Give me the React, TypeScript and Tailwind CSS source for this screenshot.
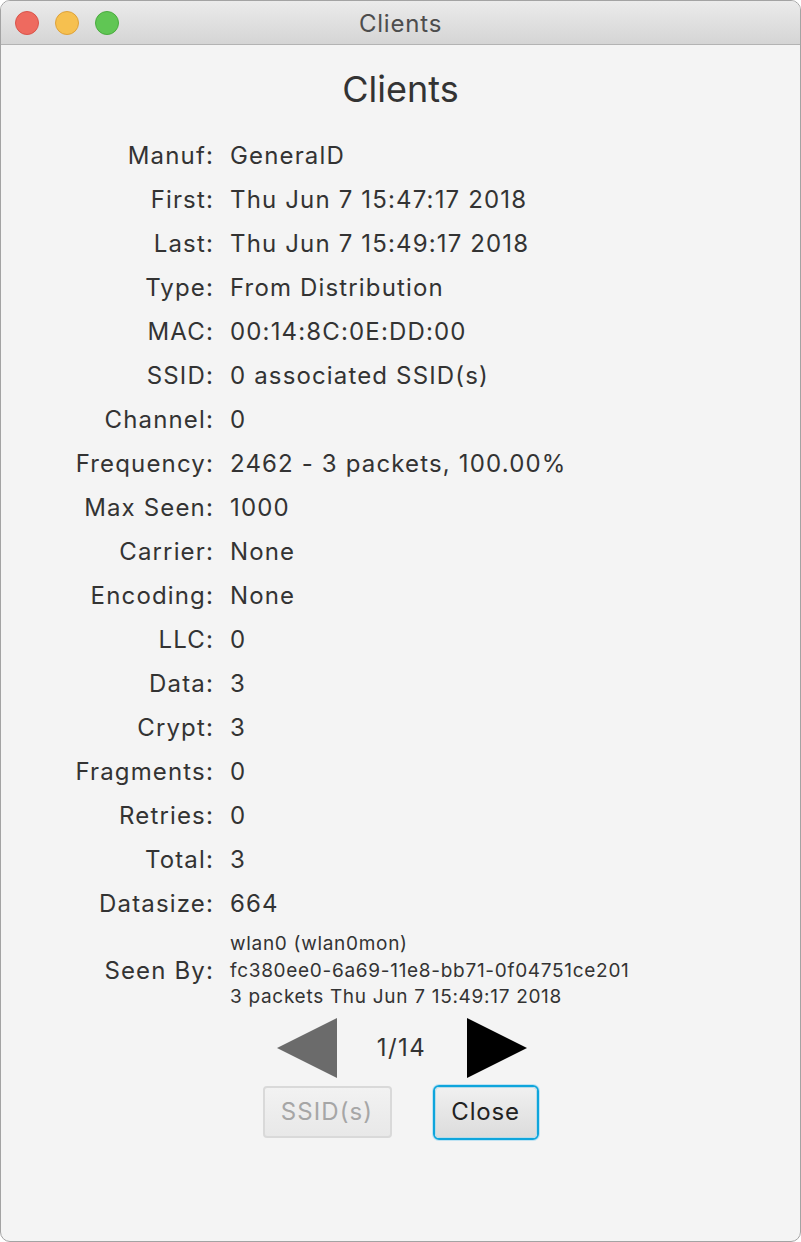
const rows: [string, string][] = [
  ["Manuf:", "GeneralD"],
  ["First:", "Thu Jun 7 15:47:17 2018"],
  ["Last:", "Thu Jun 7 15:49:17 2018"],
  ["Type:", "From Distribution"],
  ["MAC:", "00:14:8C:0E:DD:00"],
  ["SSID:", "0 associated SSID(s)"],
  ["Channel:", "0"],
  ["Frequency:", "2462 - 3 packets, 100.00%"],
  ["Max Seen:", "1000"],
  ["Carrier:", "None"],
  ["Encoding:", "None"],
  ["LLC:", "0"],
  ["Data:", "3"],
  ["Crypt:", "3"],
  ["Fragments:", "0"],
  ["Retries:", "0"],
  ["Total:", "3"],
  ["Datasize:", "664"],
];

export default function App() {
  return (
    <div
      className="w-[801px] h-[1242px] bg-[#f4f4f4] rounded-[10px] border border-[#a3a3a3] overflow-hidden flex flex-col text-[#333333]"
      style={{ fontFamily: "Inter, 'Open Sans', sans-serif" }}
    >
      {/* title bar */}
      <div className="relative h-[44px] shrink-0 bg-gradient-to-b from-[#ebebeb] to-[#d5d5d5] border-b border-[#b3b3b3] flex items-center justify-center pt-[3px]">
        <div className="absolute left-[14px] top-[10px] flex gap-[16px]">
          <span className="w-[24px] h-[24px] rounded-full bg-[#ee6a5f] border border-[#d9544a]" />
          <span className="w-[24px] h-[24px] rounded-full bg-[#f6c04f] border border-[#dea23a]" />
          <span className="w-[24px] h-[24px] rounded-full bg-[#60c654] border border-[#4aab3f]" />
        </div>
        <span className="text-[24px] tracking-[0.8px] text-[#4d4d4d] leading-none">Clients</span>
      </div>

      <div className="flex flex-col items-center">
        <h1 className="mt-[22px] text-[36px] leading-[44px] font-normal">Clients</h1>

        <div className="mt-[23px] w-full flex flex-col text-[24px] tracking-[1.15px]">
          {rows.map(([label, value]) => (
            <div key={label} className="flex h-[44px] items-center">
              <span className="w-[213px] text-right">{label}</span>
              <span className="ml-[16px]">{value}</span>
            </div>
          ))}
          <div className="flex items-center mt-[5px]">
            <span className="w-[213px] text-right">Seen By:</span>
            <div className="ml-[16px] flex flex-col text-[19px] tracking-[0.7px] leading-[26.5px]">
              <span>wlan0 (wlan0mon)</span>
              <span>fc380ee0-6a69-11e8-bb71-0f04751ce201</span>
              <span>3 packets Thu Jun 7 15:49:17 2018</span>
            </div>
          </div>
        </div>

        <div className="mt-[7px] flex items-center gap-[40px] pl-[2px]">
          <svg width="60" height="60" viewBox="0 0 60 60">
            <polygon points="60,0 60,60 0,30" fill="#6b6b6b" />
          </svg>
          <span className="text-[24px] tracking-[1.5px] w-[50px] text-center">1/14</span>
          <svg width="60" height="60" viewBox="0 0 60 60">
            <polygon points="0,0 0,60 60,30" fill="#000000" />
          </svg>
        </div>

        <div className="mt-[7px] flex items-center gap-[41px]">
          <button
            disabled
            className="w-[129px] h-[52px] rounded-[4px] border-2 border-[#d9d9d9] bg-gradient-to-b from-[#f2f2f2] to-[#e8e8e8] text-[24px] tracking-[1.1px] text-[#a6a6a6]"
          >
            SSID(s)
          </button>
          <div className="rounded-[6px] border-[2px] border-[#0ea5dc] shadow-[0_0_0_1px_#bfe3f3] p-0">
            <button className="w-[102px] h-[51px] rounded-[4px] border border-[#b8dbe8] bg-gradient-to-b from-[#f0f0f0] to-[#dcdcdc] text-[24px] tracking-[0.8px] text-[#222222]">
              Close
            </button>
          </div>
        </div>
      </div>
    </div>
  );
}
